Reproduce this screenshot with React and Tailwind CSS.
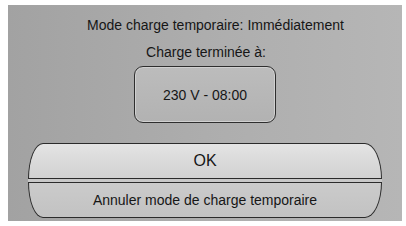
const font = { fontFamily: '"Liberation Sans", Arial, sans-serif' };

export default function App() {
  return (
    <div className="w-[406px] h-[226px] bg-white pl-[8px] pr-[4px] pt-[5px] pb-[5px]" style={font}>
      <div className="h-full flex flex-col items-center bg-gradient-to-r from-[#a2a2a2] via-[#adadad] to-[#b6b6b6] text-[#161616]">
        <p className="mt-[12px] pl-[21px] text-[14px] leading-[16px]">Mode charge temporaire: Immédiatement</p>
        <p className="mt-[11px] pl-[2px] text-[14px] leading-[16px]">Charge terminée à:</p>

        <div className="mt-[6px] w-[142px] h-[57px] flex items-center justify-center rounded-[9px] border-[1.5px] border-[#2e2e2e] bg-gradient-to-b from-[#bcbcbc] to-[#b2b2b2] shadow-[inset_0_0_0_1px_#d0d0d0]">
          <span className="text-[14px] leading-[16px]">230 V - 08:00</span>
        </div>

        <div className="mt-[20px] self-stretch mx-[20px] flex flex-col">
          <button className="h-[36px] flex items-center justify-center border-[1.5px] border-[#2b2b2b] rounded-tl-[15px_36px] rounded-tr-[17px_36px] bg-gradient-to-b from-[#e4e4e4] via-[#dadada] to-[#d2d2d2] text-[16px] leading-[18px]">
            OK
          </button>
          <div className="h-[3px] bg-[#c8c8c8]" />
          <button className="h-[36px] flex items-center justify-center border-[1.5px] border-[#2b2b2b] rounded-bl-[15px_36px] rounded-br-[17px_36px] bg-gradient-to-b from-[#cbcbcb] to-[#c2c2c2] text-[14px] leading-[16px]">
            Annuler mode de charge temporaire
          </button>
        </div>
      </div>
    </div>
  );
}
